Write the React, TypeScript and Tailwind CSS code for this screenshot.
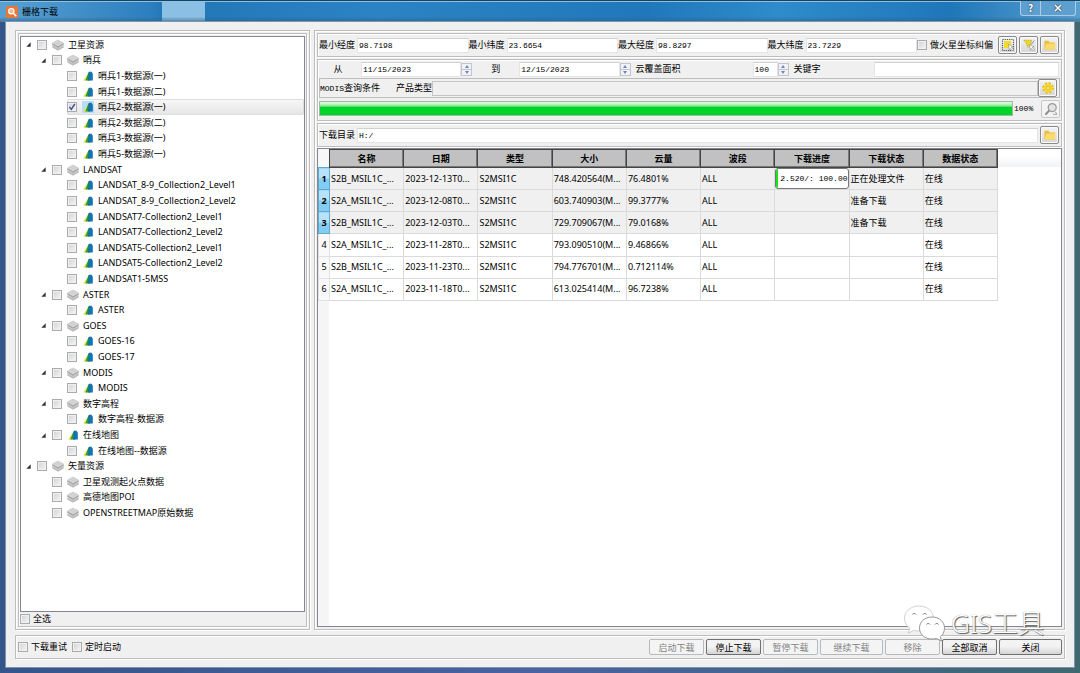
import React from "react";
import clsx from "clsx";

type TreeItem = {
  label: string;
  level: number;
  icon: "layers" | "raster";
  open?: boolean;
  checked?: boolean;
};

const treeItems: TreeItem[] = [
  { label: "卫星资源", level: 0, icon: "layers", open: true },
  { label: "哨兵", level: 1, icon: "layers", open: true },
  { label: "哨兵1-数据源(一)", level: 2, icon: "raster" },
  { label: "哨兵1-数据源(二)", level: 2, icon: "raster" },
  { label: "哨兵2-数据源(一)", level: 2, icon: "raster", checked: true },
  { label: "哨兵2-数据源(二)", level: 2, icon: "raster" },
  { label: "哨兵3-数据源(一)", level: 2, icon: "raster" },
  { label: "哨兵5-数据源(一)", level: 2, icon: "raster" },
  { label: "LANDSAT", level: 1, icon: "layers", open: true },
  { label: "LANDSAT_8-9_Collection2_Level1", level: 2, icon: "raster" },
  { label: "LANDSAT_8-9_Collection2_Level2", level: 2, icon: "raster" },
  { label: "LANDSAT7-Collection2_Level1", level: 2, icon: "raster" },
  { label: "LANDSAT7-Collection2_Level2", level: 2, icon: "raster" },
  { label: "LANDSAT5-Collection2_Level1", level: 2, icon: "raster" },
  { label: "LANDSAT5-Collection2_Level2", level: 2, icon: "raster" },
  { label: "LANDSAT1-5MSS", level: 2, icon: "raster" },
  { label: "ASTER", level: 1, icon: "layers", open: true },
  { label: "ASTER", level: 2, icon: "raster" },
  { label: "GOES", level: 1, icon: "layers", open: true },
  { label: "GOES-16", level: 2, icon: "raster" },
  { label: "GOES-17", level: 2, icon: "raster" },
  { label: "MODIS", level: 1, icon: "layers", open: true },
  { label: "MODIS", level: 2, icon: "raster" },
  { label: "数字高程", level: 1, icon: "layers", open: true },
  { label: "数字高程-数据源", level: 2, icon: "raster" },
  { label: "在线地图", level: 1, icon: "raster", open: true },
  { label: "在线地图--数据源", level: 2, icon: "raster" },
  { label: "矢量资源", level: 0, icon: "layers", open: true },
  { label: "卫星观测起火点数据", level: 1, icon: "layers" },
  { label: "高德地图POI", level: 1, icon: "layers" },
  { label: "OPENSTREETMAP原始数据", level: 1, icon: "layers" },
];

const indent = ["pl-[5px]", "pl-[20px]", "pl-[35px]"];

const headers = ["名称", "日期", "类型", "大小", "云量", "波段", "下载进度", "下载状态", "数据状态"];

const rows = [
  { name: "S2B_MSIL1C_...", date: "2023-12-13T0...", size: "748.420564(M...", cloud: "76.4801%", progress: "2.520/: 100.00", status: "正在处理文件" },
  { name: "S2A_MSIL1C_...", date: "2023-12-08T0...", size: "603.740903(M...", cloud: "99.3777%", status: "准备下载" },
  { name: "S2B_MSIL1C_...", date: "2023-12-03T0...", size: "729.709067(M...", cloud: "79.0168%", status: "准备下载" },
  { name: "S2A_MSIL1C_...", date: "2023-11-28T0...", size: "793.090510(M...", cloud: "9.46866%" },
  { name: "S2B_MSIL1C_...", date: "2023-11-23T0...", size: "794.776701(M...", cloud: "0.712114%" },
  { name: "S2A_MSIL1C_...", date: "2023-11-18T0...", size: "613.025414(M...", cloud: "96.7238%" },
];

const actions = [
  { label: "启动下载", enabled: false },
  { label: "停止下载", enabled: true },
  { label: "暂停下载", enabled: false },
  { label: "继续下载", enabled: false, wide: true },
  { label: "移除", enabled: false },
  { label: "全部取消", enabled: true },
  { label: "关闭", enabled: true, wide: true },
];

const CheckBox = ({ id, checked, label }: { id: string; checked?: boolean; label?: string }) => (
  <span className="relative block h-[10px] w-[10px] shrink-0">
    <input
      id={id}
      type="checkbox"
      defaultChecked={checked}
      aria-label={label}
      className="peer block h-[10px] w-[10px] appearance-none border border-[#a9abad] bg-linear-to-br from-[#cfd2d5] to-[#f6f6f6] shadow-[inset_0_0_0_1px_#f0f0f0]"
    />
    <svg viewBox="0 0 10 10" className="pointer-events-none absolute inset-0 hidden peer-checked:block">
      <path d="M2.4 5l1.9 2.4L7.8 2" fill="none" stroke="#3b4f97" strokeWidth="1.4" />
    </svg>
  </span>
);

const LayersIcon = () => (
  <svg viewBox="0 0 12 12" className="h-3 w-3 shrink-0">
    <path d="M0.3 6.2v2.2L6 11.8l5.7-3.4V6.2L6 9z" fill="#bcbcbc" />
    <path d="M0.3 3.8v2.3L6 9.4l5.7-3.3V3.8L6 7z" fill="#a8a8a8" />
    <path d="M6 0.4l5.7 3.2L6 7 0.3 3.6z" fill="#d2d2d2" />
    <path d="M0.3 6L6 9.3 11.7 6" fill="none" stroke="#dedede" strokeWidth="0.6" />
  </svg>
);

const RasterIcon = ({ selected }: { selected?: boolean }) => (
  <svg viewBox="0 0 12 12" className={clsx("h-3 w-3 shrink-0", selected && "bg-[#b9dcf8]")}>
    <path d="M1.2 10.6L5.6 4.2V10.6z" fill="#e8e02a" />
    <path d="M3.4 10.6L6.4 2.4 8 2v8.600z" fill="#2a9650" />
    <path d="M6 10.6L6.6 2.400 8.200 1.600v9z" fill="#127a78" />
    <path d="M7.400 1.700h2.200L10.800 3.800v6.800H7.600z" fill="#1673ba" />
  </svg>
);

const FolderIcon = () => (
  <svg viewBox="0 0 14 14" className="h-[14px] w-[14px]">
    <path d="M1.5 2.8h4l1.2 1.6h5v7.2H1.5z" fill="#eebb3c" />
    <path d="M3.2 5.4h9.6l-1.2 6.2H1.6z" fill="#fbdb69" />
  </svg>
);

const Cursor = () => (
  <path d="M7.3 6.5l4.8 2.3-1.8 0.7 2.2 2.3-1 1-2.2-2.3-0.8 1.8z" fill="#fff" stroke="#888" strokeWidth="0.6" />
);

const SelectRectIcon = () => (
  <svg viewBox="0 0 14 14" className="h-[14px] w-[14px]">
    <rect x="1.5" y="1.5" width="11" height="11" fill="none" stroke="#555" strokeDasharray="1.2 1" />
    <path d="M3 3h7v7H3z" fill="#f3dc27" />
    <Cursor />
  </svg>
);

const SelectPolygonIcon = () => (
  <svg viewBox="0 0 14 14" className="h-[14px] w-[14px]">
    <path d="M1.8 2.2h7.8L8.8 7 5.8 9.4 4.400 5.400z" fill="#f0d823" stroke="#a99a2a" strokeWidth="0.7" strokeDasharray="1.2 0.8" />
    <path d="M12.4 2.4L9.6 6.2" stroke="#888" strokeWidth="0.9" />
    <Cursor />
  </svg>
);

const GearIcon = () => (
  <svg viewBox="0 0 14 14" className="h-[14px] w-[14px]">
    <circle cx="7" cy="7" r="4.8" fill="none" stroke="#e5bd17" strokeWidth="2" strokeDasharray="2.2 1.57" />
    <circle cx="7" cy="7" r="4.4" fill="#f4d62e" />
    <circle cx="7" cy="7" r="1.5" fill="#fbf3ba" stroke="#caa516" strokeWidth="0.6" />
  </svg>
);

const SearchIcon = () => (
  <svg viewBox="0 0 14 14" className="h-[14px] w-[14px]">
    <path d="M5.4 8.4L1.4 12.6" stroke="#888" strokeWidth="2" />
    <circle cx="8.2" cy="5.6" r="4" fill="#e2e2e2" stroke="#999" strokeWidth="1.2" />
    <path d="M9 12.3h4L11.2 9.6" fill="none" stroke="#999" strokeWidth="0.9" />
  </svg>
);

const ToolButton = ({ label, disabled, children }: { label: string; disabled?: boolean; children: React.ReactNode }) => (
  <button
    type="button"
    aria-label={label}
    disabled={disabled}
    className={clsx(
      "flex h-[18px] w-[19px] shrink-0 items-center justify-center rounded-[2px] border",
      disabled ? "border-[#c4c8cc] bg-[#f4f4f4]" : "border-[#8a8a8a] bg-linear-to-b from-[#f4f4f4] to-[#d6d6d6] shadow-[inset_0_0_0_1px_#fafafa]"
    )}
  >
    {children}
  </button>
);

const fieldClass = "h-[15px] w-full min-w-0 border border-[#e3e5e8] border-t-[#cfd1d5] bg-white px-px font-['Liberation_Mono','Noto_Sans_CJK_SC',monospace] text-[8px] text-black";

const SpinBox = ({ id, value }: { id: string; value: string }) => (
  <div className="flex min-w-0">
    <input id={id} type="text" defaultValue={value} className={clsx(fieldClass, "flex-1")} />
    <div className="flex h-[13px] w-[11px] shrink-0 flex-col self-center border border-[#c3c6cc] bg-[#f1f2f5]">
      <button type="button" aria-label="增加" className="flex flex-1 items-center justify-center border-b border-[#c3c6cc]">
        <svg viewBox="0 0 4 3" className="h-[3px] w-1"><path d="M0 3L2 0l2 3z" fill="#6f86bd" /></svg>
      </button>
      <button type="button" aria-label="减少" className="flex flex-1 items-center justify-center">
        <svg viewBox="0 0 4 3" className="h-[3px] w-1"><path d="M0 0l2 3 2-3z" fill="#6f86bd" /></svg>
      </button>
    </div>
  </div>
);

const extents = [
  { id: "min-lon", label: "最小经度", value: "98.7198" },
  { id: "min-lat", label: "最小纬度", value: "23.6654" },
  { id: "max-lon", label: "最大经度", value: "98.8297" },
  { id: "max-lat", label: "最大纬度", value: "23.7229" },
];

const groupClass = "border border-[#bdbdbd] shadow-[inset_1px_1px_0_#fff,1px_1px_0_#fff]";

const ResourceTree = () => (
  <section className={clsx(groupClass, "flex w-[295px] shrink-0 flex-col p-[2px]")}>
    <div className={clsx(groupClass, "flex flex-1 flex-col px-px pt-[2px]")}>
      <div className="flex-1 border border-[#828790] bg-white">
        <ul className="flex h-[484px] flex-col font-['Noto_Sans','Noto_Sans_CJK_SC',sans-serif] text-[9px]">
          {treeItems.map((item, index) => (
            <li key={index} className={clsx("flex flex-1 items-center", indent[item.level])}>
              <span className="w-[11px] shrink-0">
                {item.open && (
                  <svg viewBox="0 0 6 6" className="h-[5px] w-[5px]"><path d="M5.6 0.4v5.2H0.4z" fill="#333" /></svg>
                )}
              </span>
              <div
                className={clsx(
                  "flex h-full flex-1 items-center rounded-[2px]",
                  item.checked && "bg-linear-to-b from-[#f8f8f8] to-[#e5e5e5] shadow-[inset_0_0_0_1px_#dedede]"
                )}
              >
                <CheckBox id={`tree-${index}`} checked={item.checked} />
                <label htmlFor={`tree-${index}`} className="ml-[5px] flex items-center gap-1 leading-[12px] whitespace-nowrap">
                  {item.icon === "layers" ? <LayersIcon /> : <RasterIcon selected={item.checked} />}
                  {item.label}
                </label>
              </div>
            </li>
          ))}
        </ul>
      </div>
      <div className="flex h-[14px] items-center gap-[3px]">
        <CheckBox id="select-all" />
        <label htmlFor="select-all">全选</label>
      </div>
    </div>
  </section>
);

const QueryForm = () => (
  <div className="flex flex-col gap-[2px]">
    <div className={clsx(groupClass, "flex h-[24px] items-center pr-[2px] pl-px")}>
      {extents.map((field) => (
        <div key={field.id} className="flex flex-1 items-center gap-[2px]">
          <label htmlFor={field.id} className="shrink-0">{field.label}</label>
          <input id={field.id} type="text" defaultValue={field.value} className={fieldClass} />
        </div>
      ))}
      <div className="flex items-center gap-[3px] pr-[5px]">
        <CheckBox id="mars" />
        <label htmlFor="mars" className="whitespace-nowrap">做火星坐标纠偏</label>
      </div>
      <div className="flex gap-[2px]">
        <ToolButton label="矩形选择"><SelectRectIcon /></ToolButton>
        <ToolButton label="多边形选择"><SelectPolygonIcon /></ToolButton>
        <ToolButton label="打开范围文件"><FolderIcon /></ToolButton>
      </div>
    </div>

    <div className={clsx(groupClass, "flex flex-col gap-px px-px pt-px pb-[2px]")}>
      <div className="grid h-[16px] grid-cols-[42px_3fr_47px_3fr_122px_36px_85px_5fr] items-center pr-px">
        <label htmlFor="from" className="pr-1 text-center">从</label>
        <SpinBox id="from" value="11/15/2023" />
        <label htmlFor="to" className="text-center">到</label>
        <SpinBox id="to" value="12/15/2023" />
        <label htmlFor="cloud" className="pl-[5px]">云覆盖面积</label>
        <SpinBox id="cloud" value="100" />
        <label htmlFor="keyword" className="pl-[5px]">关键字</label>
        <input id="keyword" type="text" className={fieldClass} />
      </div>
      <div className="flex h-[20px] items-center border border-[#bdbdbd] pr-[2px]">
        <span className="pr-[16px] whitespace-nowrap">
          <span className="font-['Liberation_Mono',monospace] text-[8px]">MODIS</span>查询条件
        </span>
        <label htmlFor="product" className="whitespace-nowrap">产品类型</label>
        <input id="product" type="text" disabled className="h-[15px] min-w-0 flex-1 border border-[#c4c4c4] bg-[#f0f0f0]" />
        <ToolButton label="查询设置"><GearIcon /></ToolButton>
      </div>
      <div className="flex h-[19px] items-center">
        <div
          role="progressbar"
          aria-valuenow={100}
          aria-label="查询进度"
          className="h-[15px] flex-1 border border-[#9fb9a2] bg-linear-to-b from-[#d5f8d9] from-10% via-[#86ea93] via-30% to-[#00d428] to-40%"
        />
        <span className="w-[28px] pl-px font-['Liberation_Mono',monospace] text-[8px]">100%</span>
        <ToolButton label="搜索" disabled><SearchIcon /></ToolButton>
      </div>
    </div>

    <div className={clsx(groupClass, "flex h-[24px] items-center gap-[2px] pr-[2px] pl-px")}>
      <label htmlFor="folder" className="shrink-0">下载目录</label>
      <input id="folder" type="text" defaultValue="H:/" className={fieldClass} />
      <ToolButton label="选择目录"><FolderIcon /></ToolButton>
    </div>
  </div>
);

const ResultTable = () => (
  <div className="relative mt-px flex-1 border border-[#828790] bg-white">
    <div className="absolute inset-x-0 top-0 h-[18px] bg-linear-to-b from-white from-40% to-[#f1f2f4]" />
    <div className="absolute inset-y-0 left-0 w-[11px] bg-[#f5f5f5]" />
    <table className="relative h-[152px] w-[680px] table-fixed border-collapse font-['Noto_Sans','Noto_Sans_CJK_SC',sans-serif] text-[9px] leading-[12px]">
      <thead>
        <tr className="h-[18px]">
          <th className="w-[11px] bg-[#f7f7f7]" />
          {headers.map((header) => (
            <th
              key={header}
              className="border border-[#444] bg-[#c3c3c3] bg-[repeating-conic-gradient(#b6b6b6_0_25%,#cbcbcb_0_50%)] bg-[length:2px_2px] p-0 font-bold shadow-[inset_-1px_-1px_0_#777]"
            >
              {header}
            </th>
          ))}
        </tr>
      </thead>
      <tbody>
        {rows.map((row, index) => {
          const selected = index < 3;
          const cells = [row.name, row.date, "S2MSI1C", row.size, row.cloud, "ALL", row.progress, row.status, "在线"];
          return (
            <tr key={index} className={clsx("h-[22px]", selected ? "bg-[#f0f0f0]" : "bg-white")}>
              <th
                className={clsx(
                  "border p-0",
                  selected
                    ? "border-[#5fa9cf] bg-linear-to-b from-[#b8e2f8] from-45% to-[#83cdf3] to-50% font-bold"
                    : "border-[#e2e2e2] bg-[#f9f9f9] font-normal"
                )}
              >
                {index + 1}
              </th>
              {cells.map((cell, i) => (
                <td key={i} className={clsx("overflow-hidden border border-[#dadada] whitespace-nowrap", i === 6 ? "p-0" : "py-0 pr-0 pl-px")}>
                  {i === 6 && cell ? (
                    <div className="h-[21px] rounded-[3px] border border-[#777] bg-white">
                      <div className="h-full rounded-l-[2px] border-l-2 border-[#19e619] pl-[2px] font-['Liberation_Mono',monospace] text-[8px] leading-[19px]">{cell}</div>
                    </div>
                  ) : (
                    cell
                  )}
                </td>
              ))}
            </tr>
          );
        })}
      </tbody>
    </table>
  </div>
);

const Watermark = () => (
  <div className="pointer-events-none absolute right-[30px] bottom-[25px] flex items-center gap-1">
    <svg viewBox="0 0 44 38" className="h-[38px] w-[44px]">
      <path d="M16 2C7.500 2 1.500 7.500 1.500 14.500c0 4 2 7.400 5.300 9.700L5.500 29l5.300-2.700c1.700.5 3.400.7 5.200.7 8.500 0 14.500-5.500 14.500-12.500S24.500 2 16 2z" fill="#fff" stroke="#c4c4c4" strokeWidth="0.8" />
      <path d="M29 13c-7.500 0-12.500 5-12.500 11s5 11 12.500 11c1.500 0 3-.2 4.400-.6L38.500 37l-1.200-4.200c2.700-2 4.200-5.200 4.200-8.800 0-6-5-11-12.500-11z" fill="#fff" stroke="#999" strokeWidth="1" />
      <path d="M9.500 10.500a2 2 0 0 1 3.500 0M20 10.500a2 2 0 0 1 3.500 0M23.500 20.500a2 2 0 0 1 3.500 0M32 20.500a2 2 0 0 1 3.500 0" fill="none" stroke="#777" strokeWidth="1" />
    </svg>
    <span className="font-['Noto_Sans','Noto_Sans_CJK_SC',sans-serif] text-[26px] leading-[30px] font-light text-white [text-shadow:1px_1px_1px_#555,0_0_1px_#888]">
      GIS工具
    </span>
  </div>
);

const App: React.FC = () => {
  return (
    <div className="flex min-h-screen flex-col bg-linear-to-r from-[#34558a] via-[#4a62a2] to-[#3f6870] px-[6px] pb-[6px] font-['Noto_Sans_CJK_SC','Liberation_Sans',sans-serif] text-[9px] leading-[12px] text-black">
      <header className="-mx-[6px] flex h-[22px] items-start justify-between border-t border-[#16445f] bg-[linear-gradient(to_bottom,transparent_75%,#2d5f80aa),linear-gradient(to_right,#5aa0d2,#2b7fbf_14%,#2378b8_15%,#8bbfe4_15%,#8bbfe4_19%,#2378b8_19%,#2c83c4_35%,#2078ba_60%,#2f8bca_72%,#1f77b9_88%,#5a9fd0)] shadow-[inset_0_1px_0_#8cc0e4,inset_0_-1px_0_#5b7f98]">
        <div className="flex h-full items-center gap-1 pl-[6px]">
          <svg viewBox="0 0 12 12" className="h-3 w-3">
            <rect width="12" height="12" rx="1" fill="#e8783a" />
            <circle cx="5.300" cy="5.200" r="2.700" fill="#f6b98c" stroke="#fff" strokeWidth="1.100" />
            <path d="M7.300 7.300l3 3" stroke="#fff" strokeWidth="1.500" />
          </svg>
          <h1>栅格下载</h1>
        </div>
        <div className="mr-[4px] flex h-[15px] rounded-b-[3px] border border-t-0 border-[#a9cde8] bg-[#5d9fce]">
          <button type="button" aria-label="帮助" className="w-[20px] border-r border-[#a9cde8] text-[10px] font-bold text-white [text-shadow:0_0_2px_#223]">?</button>
          <button type="button" aria-label="关闭窗口" className="flex w-[34px] items-center justify-center">
            <svg viewBox="0 0 8 8" className="h-2 w-2">
              <path d="M1 1l6 6M7 1L1 7" stroke="#3c546c" strokeWidth="2.800" />
              <path d="M1 1l6 6M7 1L1 7" stroke="#fff" strokeWidth="1.600" />
            </svg>
          </button>
        </div>
      </header>

      <main className="relative flex flex-1 flex-col gap-[5px] bg-[#f0f0f0] px-[9px] pt-2 pb-2 shadow-[0_0_0_1px_#7d95ad]">
        <div className="flex flex-1 gap-1">
          <ResourceTree />
          <section className={clsx(groupClass, "flex min-w-0 flex-1 flex-col p-[2px]")}>
            <QueryForm />
            <ResultTable />
          </section>
        </div>

        <footer className={clsx(groupClass, "flex h-[24px] items-center justify-between px-[2px]")}>
          <div className="flex items-center gap-[3px]">
            <CheckBox id="retry" />
            <label htmlFor="retry" className="pr-[2px]">下载重试</label>
            <CheckBox id="timer" />
            <label htmlFor="timer">定时启动</label>
          </div>
          <div className="flex gap-[2px]">
            {actions.map((action) => (
              <button
                key={action.label}
                type="button"
                disabled={!action.enabled}
                className={clsx(
                  "h-[16px] rounded-[2px] border leading-[13px]",
                  action.wide ? "w-[63px]" : "w-[55px]",
                  action.enabled
                    ? "border-[#707070] bg-linear-to-b from-[#f3f3f3] from-45% to-[#d5d5d5] text-black"
                    : "border-[#b6babf] bg-[#f4f4f4] text-[#838383]"
                )}
              >
                {action.label}
              </button>
            ))}
          </div>
        </footer>
        <Watermark />
      </main>
    </div>
  );
};

export default App;
